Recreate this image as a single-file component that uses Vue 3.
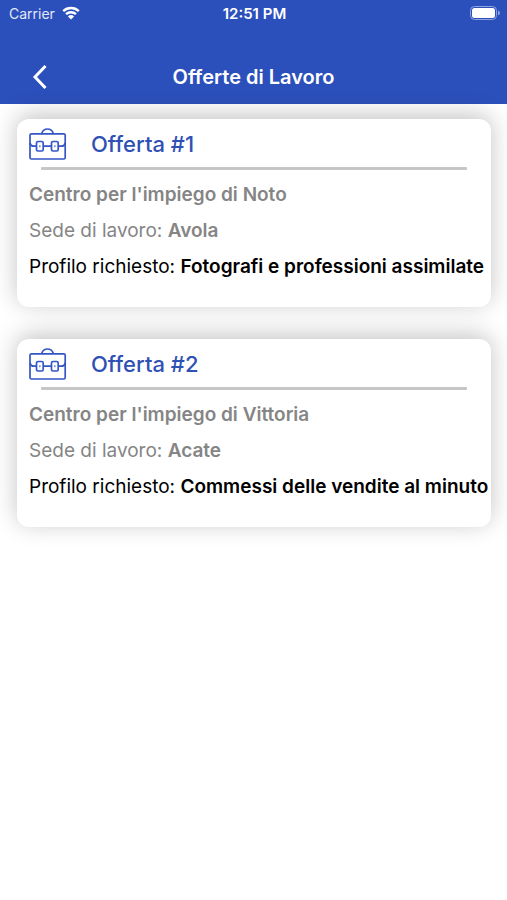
<script setup>
const offers = [
  { id: 1, center: 'Noto', place: 'Avola', profile: 'Fotografi e professioni assimilate' },
  { id: 2, center: 'Vittoria', place: 'Acate', profile: 'Commessi delle vendite al minuto' },
]
</script>

<template>
  <div class="screen">
    <header class="top">
      <div class="status">
        <div class="carrier">
          <span>Carrier</span>
          <svg class="wifi" viewBox="0 0 18 14" aria-hidden="true">
            <path d="M1.2 5.1a11.4 11.4 0 0 1 15.6 0" />
            <path d="M4 8.2a7.4 7.4 0 0 1 10 0" />
            <path class="dot" d="M9 13.6 5.9 10.4a4.6 4.6 0 0 1 6.2 0z" />
          </svg>
        </div>
        <time class="clock">12:51 PM</time>
        <svg class="battery" viewBox="0 0 30 14" aria-hidden="true">
          <rect class="shell" x="0.5" y="0.5" width="26" height="13" rx="4" />
          <rect class="level" x="2" y="2" width="23" height="10" rx="2.5" />
          <path class="tip" d="M28 4.5q2 .8 2 2.5t-2 2.5z" />
        </svg>
      </div>
      <nav class="bar">
        <button class="back" type="button" aria-label="Indietro">
          <svg viewBox="0 0 16 24" aria-hidden="true"><path d="M13.500 1 3 12l10.500 11" /></svg>
        </button>
        <h1>Offerte di Lavoro</h1>
      </nav>
    </header>

    <main class="list">
      <article v-for="offer in offers" :key="offer.id" class="card">
        <div class="head">
          <svg class="case" viewBox="0 0 38 34" aria-hidden="true">
            <rect x="1" y="6.800" width="35.200" height="25.200" rx="1.500" />
            <path d="M12.800 6.800v-.6c.8-2.700 3-4.200 5.700-4.200s4.900 1.500 5.700 4.200v.6" />
            <path d="M1 16q.6 3.200 4 3.200h2.500M14.200 19.200h8.300M29.200 19.200h3q3.400 0 4-3.200" />
            <rect x="7.500" y="14.500" width="6.700" height="9.500" rx="1.500" />
            <rect x="22.500" y="14.500" width="6.700" height="9.500" rx="1.500" />
            <path class="pin" d="M10.900 18.200v2M25.900 18.200v2" />
          </svg>
          <h2>Offerta #{{ offer.id }}</h2>
        </div>
        <hr />
        <div class="details">
          <p class="center">Centro per l'impiego di {{ offer.center }}</p>
          <p class="place">Sede di lavoro: <b>{{ offer.place }}</b></p>
          <p class="profile">Profilo richiesto: <b>{{ offer.profile }}</b></p>
        </div>
      </article>
    </main>
  </div>
</template>

<style>
body {
  background: #fff;
}
</style>

<style scoped>
.screen {
  font-family: Inter, 'Liberation Sans', sans-serif;
  color: #000;
  overflow: hidden;
}

.top {
  background: #2c50bb;
  color: #fff;
}

.status {
  display: grid;
  grid-template-columns: 1fr auto 1fr;
  align-items: center;
  height: 26px;
  padding: 0 7px 0 9px;
  font-size: 14px;
}

.carrier {
  display: flex;
  align-items: center;
  gap: 7px;
  color: #e2e8fa;
}

.wifi {
  width: 18px;
  height: 14px;
  fill: none;
  stroke: #fff;
  stroke-width: 2.4;
}

.wifi .dot {
  fill: #fff;
  stroke: none;
}

.clock {
  font-size: 15px;
  font-weight: 600;
}

.battery {
  width: 30px;
  height: 14px;
  justify-self: end;
}

.shell {
  fill: none;
  stroke: #8fa3df;
}

.level {
  fill: #fff;
}

.tip {
  fill: #8fa3df;
}

.bar {
  display: grid;
  grid-template-columns: 48px 1fr 48px;
  align-items: center;
  padding: 28px 16px 4px;
}

.back {
  display: grid;
  place-items: center;
  height: 46px;
  padding: 0;
  border: 0;
  background: none;
  cursor: pointer;
}

.back svg {
  width: 16px;
  height: 24px;
  fill: none;
  stroke: #fff;
  stroke-width: 3;
}

h1 {
  margin: 0;
  text-align: center;
  font-size: 20px;
  line-height: 24px;
  font-weight: 600;
}

.list {
  display: grid;
  gap: 32px;
  padding: 15px 16px 32px 17px;
}

.card {
  padding-bottom: 22px;
  border-radius: 12px;
  background: #fff;
  box-shadow: 0 -4px 24px rgba(0, 0, 0, 0.24);
}

.head {
  display: flex;
  align-items: center;
  gap: 24px;
  height: 46px;
  padding: 2px 12px 0;
}

.case {
  width: 38px;
  height: 34px;
  fill: none;
  stroke: #3556c5;
  stroke-width: 1.7;
}

.pin {
  stroke-width: 1;
}

h2 {
  margin: 0;
  color: #2f50b5;
  font-size: 22px;
  line-height: 28px;
  font-weight: 500;
}

hr {
  height: 3px;
  margin: 0 24px;
  border: 0;
  border-radius: 1px;
  background: #c6c6c6;
}

.details {
  padding: 7px 0 0 12px;
  font-size: 19px;
  line-height: 36px;
  white-space: nowrap;
}

.details p {
  margin: 0;
}

.center {
  color: #858585;
  font-weight: 600;
}

.place {
  color: #858585;
}

.details b {
  font-weight: 600;
}
</style>
